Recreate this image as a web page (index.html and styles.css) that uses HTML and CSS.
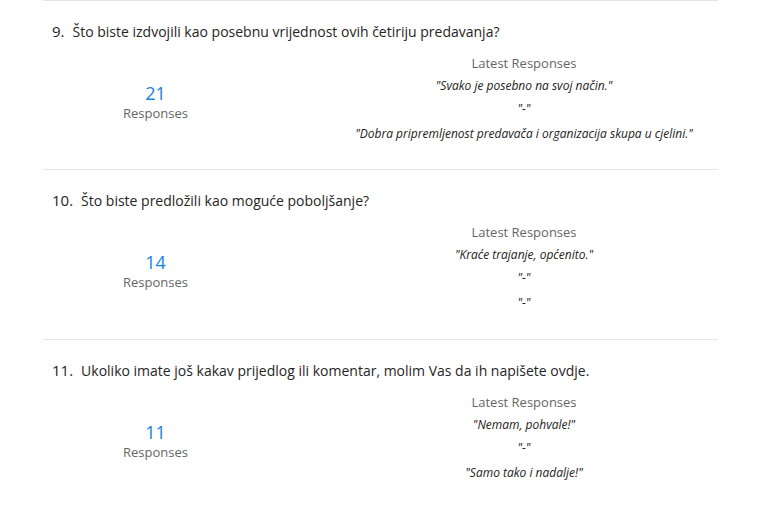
FILE: index.html
```html
<!DOCTYPE html>
<html lang="hr">

<head>
    <meta charset="UTF-8">
    <meta name="viewport" content="width=device-width, initial-scale=1.0">
    <title>Summary</title>
    <link rel="stylesheet" href="styles.css">
</head>

<body>
    <div class="summary">

        <div class="question">
            <div class="title"><span class="num">9.</span>Što biste izdvojili kao posebnu vrijednost ovih četiriju predavanja?</div>
            <div class="result">
                <div class="count">
                    <div class="big">21</div>
                    <div class="label">Responses</div>
                </div>
                <div class="latest">
                    <div class="head">Latest Responses</div>
                    <div class="item">"Svako je posebno na svoj način."</div>
                    <div class="item">"-"</div>
                    <div class="item">"Dobra pripremljenost predavača i organizacija skupa u cjelini."</div>
                </div>
            </div>
        </div>

        <div class="question">
            <div class="title"><span class="num">10.</span>Što biste predložili kao moguće poboljšanje?</div>
            <div class="result">
                <div class="count">
                    <div class="big">14</div>
                    <div class="label">Responses</div>
                </div>
                <div class="latest">
                    <div class="head">Latest Responses</div>
                    <div class="item">"Kraće trajanje, općenito."</div>
                    <div class="item">"-"</div>
                    <div class="item">"-"</div>
                </div>
            </div>
        </div>

        <div class="question">
            <div class="title"><span class="num">11.</span>Ukoliko imate još kakav prijedlog ili komentar, molim Vas da ih napišete ovdje.</div>
            <div class="result">
                <div class="count">
                    <div class="big">11</div>
                    <div class="label">Responses</div>
                </div>
                <div class="latest">
                    <div class="head">Latest Responses</div>
                    <div class="item">"Nemam, pohvale!"</div>
                    <div class="item">"-"</div>
                    <div class="item">"Samo tako i nadalje!"</div>
                </div>
            </div>
        </div>

    </div>
</body>

</html>
```

FILE: styles.css
```css
* {
    padding: 0;
    margin: 0;
    box-sizing: border-box;
}

body {
    background-color: white;
    font-family: "Open Sans", "Noto Sans", sans-serif;
    color: #333;
}

.summary {
    width: 675px;
    margin-left: 43px;
}

.question {
    border-top: 1px solid #e6e6e6;
    height: 170px;
    padding-top: 20px;
}

.question:first-child {
    height: 169px;
}

.title {
    font-size: 14px;
    line-height: 20px;
    padding-left: 9px;
    color: #252525;
}

.num {
    font-size: 15px;
    margin-right: 8px;
}

.result {
    display: grid;
    grid-template-columns: 225px 1fr;
}

.count {
    text-align: center;
    padding-top: 40px;
}

.big {
    font-size: 18px;
    line-height: 22px;
    color: #1683e0;
}

.label {
    font-size: 13px;
    line-height: 18px;
    color: #666;
}

.latest {
    text-align: center;
    padding-left: 62px;
    padding-top: 11px;
}

.head {
    font-size: 13px;
    line-height: 20px;
    color: #666;
}

.item {
    font-size: 12px;
    font-style: italic;
    line-height: 16px;
    margin-top: 7px;
    color: #222;
}

.head + .item {
    margin-top: 5px;
}

.item:last-child {
    margin-top: 9px;
}
```
